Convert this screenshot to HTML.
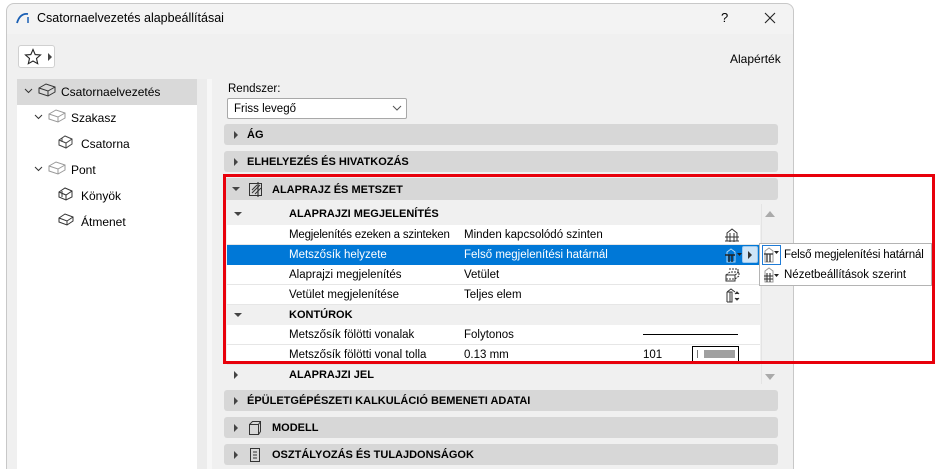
<!DOCTYPE html>
<html style="overflow:hidden;width:936px;height:469px"><head><meta charset="utf-8"><style>
*{margin:0;padding:0;box-sizing:border-box}
body{width:936px;height:469px;background:#fff;font-family:"Liberation Sans",sans-serif;font-size:11.5px;color:#000;position:relative;overflow:hidden}
.a{position:absolute}
.win{left:6px;top:3px;width:788px;height:466px;background:#f0f0f0;border:1px solid #c8c8c8;border-bottom:none;border-radius:8px 8px 0 0}
.title{left:7px;top:4px;width:786px;height:30px;background:#f3f3f3;border-radius:8px 8px 0 0}
.sec{left:224px;width:554px;height:21px;background:#d7d7d7;border-radius:3px;font-weight:bold;font-size:11px;line-height:22px}
.tri{position:absolute;width:0;height:0;border-left:4px solid #444;border-top:4px solid transparent;border-bottom:4px solid transparent}
.trd{position:absolute;width:0;height:0;border-top:4px solid #444;border-left:4px solid transparent;border-right:4px solid transparent}
.row{left:227px;width:533px;height:20px;background:#fff;border-bottom:1px solid #e6e6e6;line-height:21px}
.row .n{position:absolute;left:62px}
.row .v{position:absolute;left:237px}
.sub{left:224px;width:536px;height:20px;background:#f0f0f0;font-weight:bold;font-size:11px;line-height:21px}
.tree{font-size:12px}
</style></head><body>
<div class="a win"></div>
<div class="a title"></div>
<svg class="a" style="left:16px;top:12px" width="14" height="12"><path d="M1 11 Q4 1 12 2" stroke="#1a5fb4" stroke-width="1.8" fill="none"/><path d="M12 5 V11" stroke="#1a5fb4" stroke-width="1.5"/></svg>
<div class="a" style="left:37px;top:11px;font-size:12.5px">Csatornaelvezetés alapbeállításai</div>
<div class="a" style="left:721px;top:10px;font-size:13px">?</div>
<svg class="a" style="left:764px;top:12px" width="12" height="12"><path d="M1 1L11 11M11 1L1 11" stroke="#222" stroke-width="1.1"/></svg>
<div class="a" style="left:18px;top:45px;width:37px;height:23px;background:#fff;border:1px solid #d0d0d0;border-radius:3px"></div>
<svg class="a" style="left:24px;top:48px" width="18" height="17"><path d="M9 1.5L11.2 6.6 16.5 7 12.5 10.5 13.7 15.7 9 13 4.3 15.7 5.5 10.5 1.5 7 6.8 6.6Z" fill="none" stroke="#222" stroke-width="1.1"/></svg>
<div class="tri" style="left:48px;top:53px"></div>
<div class="a" style="left:730px;top:52px;font-size:12px">Alapérték</div>
<!-- tree -->
<div class="a" style="left:17px;top:79px;width:180px;height:390px;background:#fff"></div>
<div class="a" style="left:197px;top:79px;width:10px;height:390px;background:#ececec"></div>
<div class="a" style="left:207px;top:79px;width:5px;height:390px;background:#f7f7f7"></div>
<div class="a" style="left:17px;top:79px;width:180px;height:26px;background:#d9d9d9"></div>
<svg class="a" style="left:0;top:79px" width="200" height="160" fill="none" stroke-width="1">
<path d="M25 10l3.5 3.5 3.5-3.5" stroke="#333"/>
<path d="M39 9l7-4 9 3v5l-7 4-9-3z M39 9l9 3 7-4 M48 12v5" stroke="#333"/>
<path d="M35 36l3.5 3.5 3.5-3.5" stroke="#333"/>
<path d="M49 35l7-4 9 3v5l-7 4-9-3z M49 35l9 3 7-4 M58 38v5" stroke="#999"/>
<path d="M59 61l6-4 7 3v5l-6 4-7-3z M59 61l7 3 6-4 M66 64v5 M62 59v4" stroke="#444"/>
<path d="M35 88l3.5 3.5 3.5-3.5" stroke="#333"/>
<path d="M49 87l7-4 9 3v5l-7 4-9-3z M49 87l9 3 7-4 M58 90v5" stroke="#999"/>
<path d="M59 113l6-4 7 3v6l-6 3-7-3z M59 113l7 3 6-4 M62 112v6 M66 116v5" stroke="#333"/>
<path d="M59 139l6-4 8 3v4l-6 4-8-3z M59 139l8 3 6-4 M67 142v4" stroke="#333"/>
</svg>
<div class="a tree" style="left:61px;top:85px">Csatornaelvezetés</div>
<div class="a tree" style="left:71px;top:111px">Szakasz</div>
<div class="a tree" style="left:81px;top:137px">Csatorna</div>
<div class="a tree" style="left:71px;top:163px">Pont</div>
<div class="a tree" style="left:81px;top:189px">Könyök</div>
<div class="a tree" style="left:81px;top:215px">Átmenet</div>
<!-- right -->
<div class="a" style="left:228px;top:83px">Rendszer:</div>
<div class="a" style="left:227px;top:98px;width:180px;height:21px;background:#fff;border:1px solid #a8a8a8;border-radius:2px;line-height:20px;padding-left:6px">Friss levegő</div>
<svg class="a" style="left:392px;top:104px" width="10" height="8"><path d="M1 2l4 4 4-4" stroke="#555" fill="none"/></svg>
<div class="a sec" style="top:124px"><div class="tri" style="left:10px;top:7px"></div><span style="position:absolute;left:23px">ÁG</span></div>
<div class="a sec" style="top:151px"><div class="tri" style="left:10px;top:7px"></div><span style="position:absolute;left:23px">ELHELYEZÉS ÉS HIVATKOZÁS</span></div>
<div class="a sec" style="top:178px;height:22px"><div class="trd" style="left:8px;top:9px"></div>
<svg style="position:absolute;left:24px;top:3px" width="16" height="16" fill="none" stroke="#333"><rect x="1.5" y="2.5" width="12" height="12"/><path d="M4 12l8-8 M7 13l6-6 M4 9l5-5" stroke-width="1"/><path d="M10 1v15" stroke-width="1.2"/></svg>
<span style="position:absolute;left:48px;top:1px">ALAPRAJZ ÉS METSZET</span></div>
<div class="a sub" style="top:204px"><div class="trd" style="left:10px;top:8px"></div><span style="position:absolute;left:65px">ALAPRAJZI MEGJELENÍTÉS</span></div>
<div class="a row" style="top:225px"><span class="n" style="letter-spacing:-0.2px">Megjelenítés ezeken a szinteken</span><span class="v">Minden kapcsolódó szinten</span>
<svg style="position:absolute;left:497px;top:2px" width="16" height="16" fill="none" stroke="#333"><path d="M3 6l5-4 5 4v8H3z M1 10h14 M1 14h14 M6 6v9 M10 6v9"/></svg></div>
<div class="a row" style="top:245px;background:#0078d7;color:#fff;border-bottom-color:#0078d7"><span class="n">Metszősík helyzete</span><span class="v">Felső megjelenítési határnál</span>
<svg style="position:absolute;left:497px;top:2px" width="20" height="16" fill="none" stroke="#fff"><path d="M3 5l4-3 4 3v10H3z" stroke-opacity=".7"/><path d="M1 8h10 M5 8v7 M8 8v7" stroke="#222" stroke-width="1.4"/><path d="M13 6h5l-2.5 3z" fill="#222" stroke="none"/></svg>
<div style="position:absolute;left:515px;top:1px;width:16px;height:17px;background:#cfe5f7;border:1px solid #9cc8ee;border-radius:2px"><div class="tri" style="left:5px;top:4px;border-left-color:#333"></div></div></div>
<div class="a row" style="top:265px"><span class="n">Alaprajzi megjelenítés</span><span class="v">Vetület</span>
<svg style="position:absolute;left:497px;top:2px" width="16" height="16" fill="none" stroke="#333"><path d="M5 2h9v4 M2 8l4-3h9v4l-4 3H2z M2 8h9v6 M11 8l4-3" stroke-dasharray="2 1"/><path d="M2 8h9v6H2z"/></svg></div>
<div class="a row" style="top:285px"><span class="n">Vetület megjelenítése</span><span class="v">Teljes elem</span>
<svg style="position:absolute;left:497px;top:2px" width="16" height="16" fill="none" stroke="#333"><path d="M3 5l4-3 4 3 M3 5v10 M3 5h5v10H3 M6 5v10"/><path d="M11 7l2-2 2 2 M11 11l2 2 2-2" fill="#333"/></svg></div>
<div class="a sub" style="top:305px"><div class="trd" style="left:10px;top:8px"></div><span style="position:absolute;left:65px">KONTÚROK</span></div>
<div class="a row" style="top:325px"><span class="n">Metszősík fölötti vonalak</span><span class="v">Folytonos</span><div style="position:absolute;left:416px;top:9px;width:95px;height:1px;background:#000"></div></div>
<div class="a row" style="top:345px"><span class="n">Metszősík fölötti vonal tolla</span><span class="v">0.13 mm</span><span style="position:absolute;left:416px">101</span>
<div style="position:absolute;left:465px;top:1px;width:47px;height:16px;border:1px solid #000;background:#fff"><div style="position:absolute;left:4px;top:3px;width:1px;height:8px;background:#777"></div><div style="position:absolute;left:11px;top:3px;width:31px;height:8px;background:#a0a0a0"></div></div></div>
<div class="a sub" style="top:365px"><div class="tri" style="left:10px;top:6px"></div><span style="position:absolute;left:65px">ALAPRAJZI JEL</span></div>
<div class="a" style="left:761px;top:204px;width:1px;height:180px;background:#e4e4e4"></div>
<div class="a trd" style="left:765px;top:211px;border-top:none;border-bottom:6px solid #aaa;border-left-width:5px;border-right-width:5px"></div>
<div class="a trd" style="left:765px;top:374px;border-top:6px solid #aaa;border-left-width:5px;border-right-width:5px"></div>
<div class="a sec" style="top:390px"><div class="tri" style="left:10px;top:7px"></div><span style="position:absolute;left:23px">ÉPÜLETGÉPÉSZETI KALKULÁCIÓ BEMENETI ADATAI</span></div>
<div class="a sec" style="top:417px"><div class="tri" style="left:10px;top:7px"></div>
<svg style="position:absolute;left:24px;top:3px" width="14" height="16" fill="none" stroke="#333"><path d="M1.5 4.5h9v10h-9z M1.5 4.5l3-3h8v10l-2 3 M10.5 4.5l2-3"/></svg>
<span style="position:absolute;left:48px">MODELL</span></div>
<div class="a sec" style="top:444px"><div class="tri" style="left:10px;top:7px"></div>
<svg style="position:absolute;left:25px;top:3px" width="12" height="16" fill="none" stroke="#333"><rect x="1.5" y="1.5" width="9" height="13"/><path d="M4 5h4 M4 8h4 M4 11h4"/></svg>
<span style="position:absolute;left:48px">OSZTÁLYOZÁS ÉS TULAJDONSÁGOK</span></div>
<!-- popup -->
<div class="a" style="left:759px;top:243px;width:173px;height:43px;background:#fff;border:1px solid #b4b4b4"></div>
<div class="a" style="left:762px;top:245px;width:19px;height:20px;border:1px solid #1f7bd6"></div>
<svg class="a" style="left:763px;top:247px" width="20" height="38" fill="none" stroke="#333"><path d="M2 4l4-3 4 3v11H2z" stroke="#999"/><path d="M1 7h9 M4 7v8 M7 7v8" stroke-width="1.3"/><path d="M11 4h5l-2.5 3z" fill="#222" stroke="none"/>
<path d="M2 24l4-3 4 3v11H2z" stroke="#999"/><path d="M1 29h9 M1 32h9 M4 26v9 M7 26v9" stroke-width="1.1"/><path d="M11 27h5l-2.5 3z" fill="#222" stroke="none"/></svg>
<div class="a" style="left:784px;top:249px;letter-spacing:-0.15px">Felső megjelenítési határnál</div>
<div class="a" style="left:784px;top:269px">Nézetbeállítások szerint</div>
<!-- red box -->
<div class="a" style="left:223px;top:174px;width:712px;height:190px;border:3px solid #e8000b"></div>
</body></html>
